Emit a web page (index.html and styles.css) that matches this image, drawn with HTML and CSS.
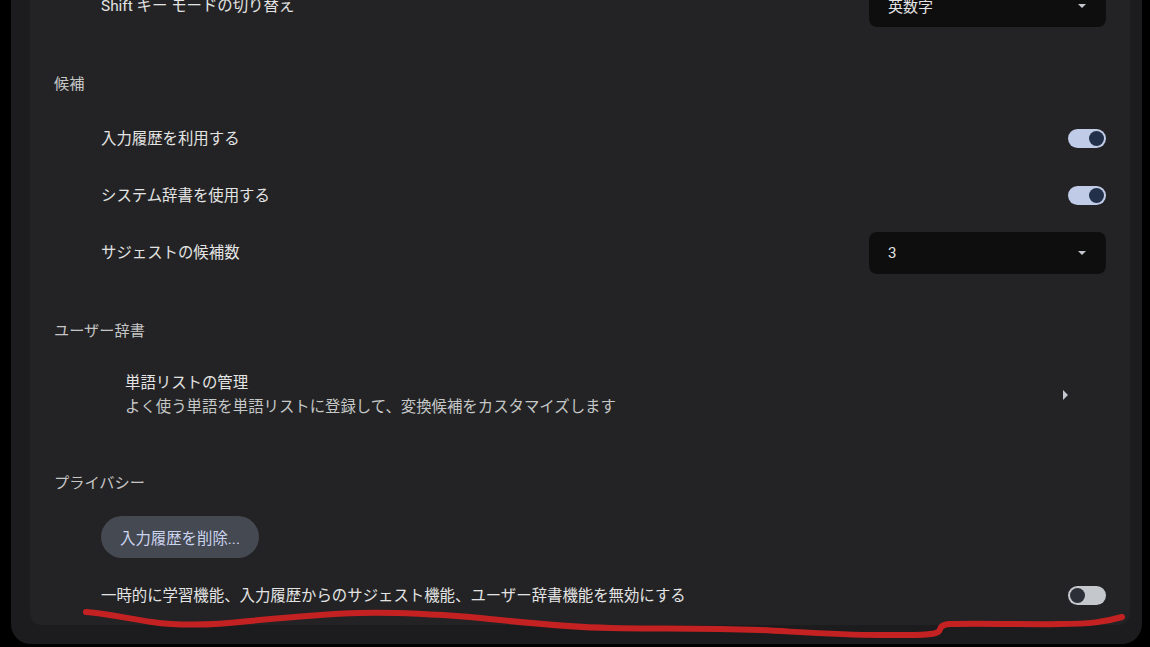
FILE: index.html
```html
<!DOCTYPE html>
<html lang="ja">
<head>
<meta charset="utf-8">
<title>設定</title>
<link rel="stylesheet" href="styles.css">
</head>
<body>
<div class="panel">
  <div class="card">
    <div class="row first">
      <span class="label">Shift キー モードの切り替え</span>
      <div class="select"><span>英数字</span><span class="caret"></span></div>
    </div>

    <div class="section">候補</div>
    <div class="row">
      <span class="label">入力履歴を利用する</span>
      <span class="toggle on"><span class="knob"></span></span>
    </div>
    <div class="row">
      <span class="label">システム辞書を使用する</span>
      <span class="toggle on"><span class="knob"></span></span>
    </div>
    <div class="row">
      <span class="label">サジェストの候補数</span>
      <div class="select"><span>3</span><span class="caret"></span></div>
    </div>

    <div class="section">ユーザー辞書</div>
    <div class="link-row">
      <div class="link-text">
        <div class="label">単語リストの管理</div>
        <div class="sub">よく使う単語を単語リストに登録して、変換候補をカスタマイズします</div>
      </div>
      <span class="arrow"></span>
    </div>

    <div class="section">プライバシー</div>
    <div class="button-row">
      <button class="pill">入力履歴を削除...</button>
    </div>
    <div class="row">
      <span class="label">一時的に学習機能、入力履歴からのサジェスト機能、ユーザー辞書機能を無効にする</span>
      <span class="toggle"><span class="knob"></span></span>
    </div>
  </div>
</div>
<svg class="annotation" width="1150" height="647" viewBox="0 0 1150 647">
  <path d="M86 612 C110 614 130 619 152 622 C180 626 215 625 250 621 C290 617 320 614 360 613 C400 612 430 614 470 617 C520 622 560 627 610 628 C660 629 700 628 760 630 C800 632 840 635 880 635 C910 635 932 636 938 632 C942 629 938 625 950 624 C990 623 1030 625 1060 624 C1090 624 1105 622 1122 617" fill="none" stroke="#c42222" stroke-width="6" stroke-linecap="round" stroke-linejoin="round"/>
</svg>
</body>
</html>
```

FILE: styles.css
```css
html, body {
  margin: 0;
  padding: 0;
}
body {
  width: 1150px;
  height: 647px;
  overflow: hidden;
  background: #000;
  font-family: "Roboto", "Noto Sans CJK JP", sans-serif;
  position: relative;
}
.panel {
  margin-left: 11px;
  width: 1131px;
  background: #1c1c1e;
  border-radius: 0 0 20px 20px;
  padding: 0 12px 19px 19px;
  box-sizing: border-box;
}
.card {
  background: #232325;
  border-radius: 0 0 12px 12px;
  padding-bottom: 1px;
}
.row {
  height: 57px;
  display: flex;
  align-items: center;
  justify-content: space-between;
  padding: 0 24px 0 71px;
}
.row.first {
  margin-top: -23px;
}
.label {
  font-size: 15.4px;
  line-height: 24px;
  color: #e3e3e3;
}
.section {
  padding: 39px 0 15px 24px;
  font-size: 15.2px;
  line-height: 22px;
  color: #c6c6c6;
}
.select {
  width: 237px;
  height: 42px;
  box-sizing: border-box;
  background: #0e0e0e;
  border-radius: 8px;
  display: flex;
  align-items: center;
  justify-content: space-between;
  padding: 0 20px 0 19px;
  font-size: 15px;
  color: #e3e3e3;
}
.caret {
  width: 0;
  height: 0;
  border-left: 4px solid transparent;
  border-right: 4px solid transparent;
  border-top: 4px solid #c4c7cf;
}
.toggle {
  width: 38px;
  height: 19px;
  border-radius: 10px;
  background: #c4c7cc;
  display: flex;
  align-items: center;
  padding: 0 2px;
  box-sizing: border-box;
}
.toggle .knob {
  width: 15px;
  height: 15px;
  border-radius: 50%;
  background: #2c2f37;
}
.toggle.on {
  background: #c0cbe7;
  justify-content: flex-end;
}
.toggle.on .knob {
  background: #233049;
}
.link-row {
  height: 76px;
  display: flex;
  align-items: center;
  justify-content: space-between;
  padding: 0 62px 0 95px;
}
.sub {
  font-size: 15.4px;
  line-height: 24px;
  color: #c4c7c5;
}
.arrow {
  width: 0;
  height: 0;
  border-top: 5px solid transparent;
  border-bottom: 5px solid transparent;
  border-left: 5px solid #c4c7cf;
}
.button-row {
  padding: 7px 0 9px 71px;
  display: flex;
}
.pill {
  height: 42px;
  width: 158px;
  border: none;
  border-radius: 21px;
  background: #454951;
  color: #cbd4ee;
  font-family: "Roboto", "Noto Sans CJK JP", sans-serif;
  font-size: 15.4px;
  padding: 0;
}
.annotation {
  position: absolute;
  left: 0;
  top: 0;
  pointer-events: none;
}
```
